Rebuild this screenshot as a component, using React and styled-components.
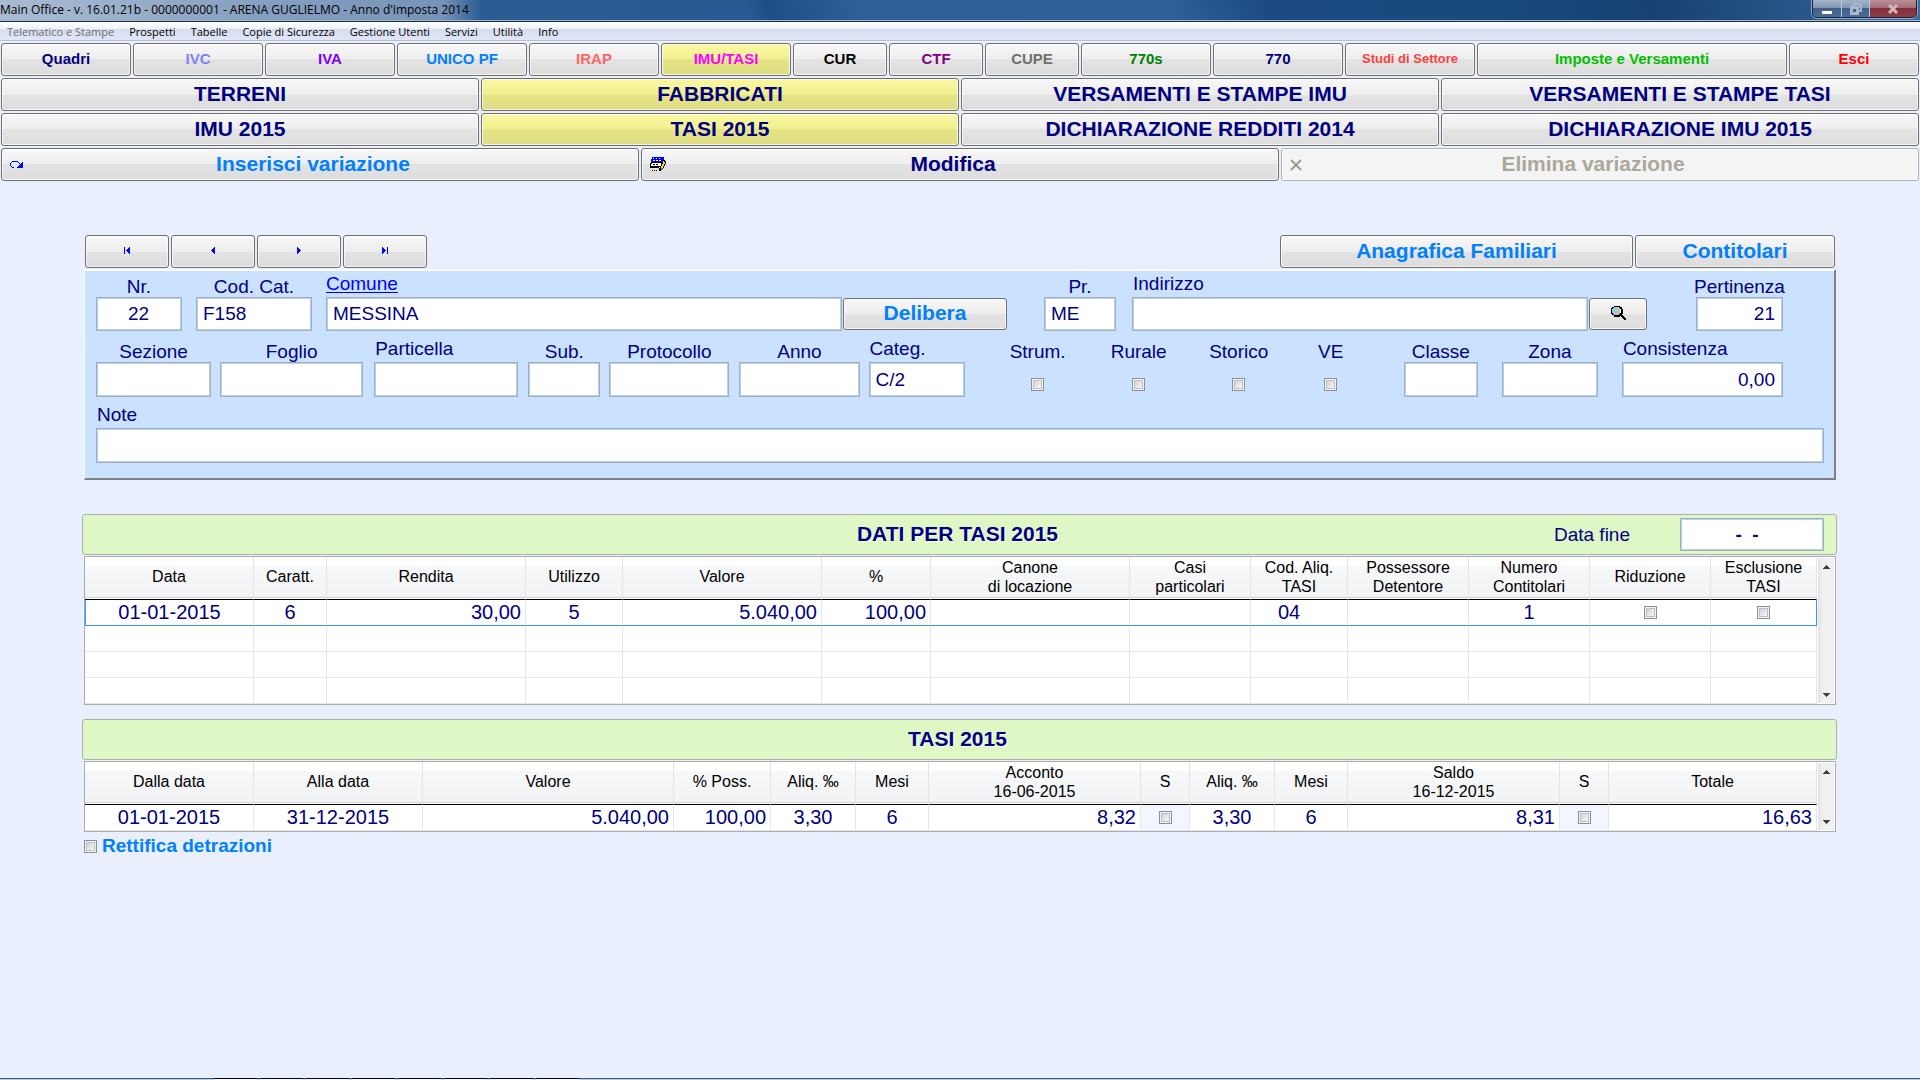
import React from 'react';
import styled, { createGlobalStyle, css } from 'styled-components';

const NAVY = '#000080';
const SKY = '#0080ff';

const GlobalStyle = createGlobalStyle`
  *, *::before, *::after { box-sizing: border-box; }
  body {
    margin: 0;
    background: #e9effd;
    color: ${NAVY};
    font-family: "Liberation Sans", Arial, sans-serif;
    font-size: 19px;
  }
  button, input { font-family: inherit; color: inherit; margin: 0; }
`;

const Window = styled.div`
  min-height: 100vh;
  display: flex;
  flex-direction: column;
`;

/* ---------- title bar and menu ---------- */

const TitleBar = styled.header`
  height: 22px;
  display: flex;
  justify-content: space-between;
  align-items: flex-start;
  border-bottom: 1px solid #1d2b45;
  box-shadow: inset 0 -1px 0 #9dbad9;
  background: linear-gradient(75deg, #6f8fb8 0%, #2c5a92 14%, #2b5c94 30%, #275a92 39%, #1c4f85 40%,
    #2d6198 45%, #2d6197 61%, #1b4b80 66%, #184a7e 78%, #174172 86%, #2a5689 94%, #3f6b9c 100%);
`;

const Caption = styled.h1`
  margin: 0;
  padding-right: 12px;
  font: 400 12px/20px "Open Sans", "Noto Sans", sans-serif;
  color: #000;
  white-space: nowrap;
  background: linear-gradient(90deg, rgba(190, 203, 220, 0.75), rgba(150, 172, 200, 0.7) 92%, rgba(150, 172, 200, 0));
`;

const CaptionButtons = styled.div`
  display: flex;
  height: 18px;
  margin-right: 3px;
  border: 1px solid #10243f;
  border-top: 0;
  border-radius: 0 0 5px 5px;
  box-shadow: 0 0 0 1px #8fa9c6;
  overflow: hidden;
`;

const CaptionButton = styled.button`
  width: ${(p) => (p.$close ? 47 : 28)}px;
  padding: 0;
  border: 0;
  border-left: ${(p) => (p.$first ? 0 : 1)}px solid #b9c8da;
  display: flex;
  align-items: center;
  justify-content: center;
  background: ${(p) =>
    p.$close
      ? 'linear-gradient(#b98f98, #a06a74 50%, #83303b 50%, #8d3c46)'
      : 'linear-gradient(#a3b4c9, #7b93b0 50%, #3f6088 50%, #4a6d95)'};
`;

const MenuBar = styled.nav`
  height: 19px;
  display: flex;
  align-items: center;
  border-bottom: 1px solid #b6bcd2;
  background: linear-gradient(#ffffff 0, #eef1f8 7px, #d6ddef 7px, #e0e6f6 100%);
`;

const MenuItem = styled.button`
  padding: 1px 8px 0 7px;
  border: 0;
  background: none;
  font: 400 11px/18px "Open Sans", "Noto Sans", sans-serif;
  color: ${(p) => (p.disabled ? '#6d6d6d' : '#000')};
  white-space: nowrap;
`;

/* ---------- buttons ---------- */

const faces = {
  plain: 'linear-gradient(#f8f8f8, #ededed 50%, #e3e3e3 50%, #dddddd)',
  active: 'linear-gradient(#faf9a2, #f1ef8e 50%, #e6e485 50%, #dfdd84)',
  disabled: '#f4f4f4',
};

const Button = styled.button`
  position: relative;
  flex: ${(p) => p.$grow || 478} 1 ${(p) => p.$grow || 478}px;
  min-width: 0;
  height: 33px;
  padding: 0 0 2px;
  display: flex;
  align-items: center;
  justify-content: center;
  border: 1px solid ${(p) => (p.disabled ? '#adb2b5' : '#707070')};
  border-radius: 3px;
  box-shadow: inset 0 0 0 1px rgba(255, 255, 255, 0.7);
  background: ${(p) => (p.disabled ? faces.disabled : p.$active ? faces.active : faces.plain)};
  color: ${(p) => p.$color || NAVY};
  font-size: ${(p) => p.$size || 21}px;
  font-weight: 700;
  white-space: nowrap;
`;

const ActionButton = styled(Button)`
  padding-right: 14px;
`;

const ButtonIcon = styled.span`
  position: absolute;
  left: 8px;
  top: 0;
  height: 100%;
  display: flex;
  align-items: center;
`;

const Toolbar = styled.div`
  display: flex;
  gap: 2px;
  padding: 2px 1px 0;
`;

/* ---------- property form ---------- */

const Content = styled.main`
  flex: 1;
  padding: 54px 83px 0 82px;
`;

const RecordBar = styled.div`
  display: flex;
  gap: 2px;
  margin: 0 2px 1px 3px;
`;

const Spacer = styled.div`
  flex: ${(p) => p.$grow} 1 ${(p) => p.$grow}px;
`;

const Panel = styled.section`
  margin: 0 1px 0 2px;
  padding: 3px 10px 15px 11px;
  display: flex;
  flex-direction: column;
  gap: 8px;
  background: #cae1ff;
  border-style: solid;
  border-width: 2px 2px 2px 1px;
  border-color: #fdfdfd #7c8288 #7c8288 #fdfdfd;
`;

const FieldRow = styled.div`
  --field-height: ${(p) => p.$height || 35}px;
  display: flex;
  align-items: flex-end;
  padding-right: ${(p) => p.$end || 0}px;
`;

const cell = css`
  flex: ${(p) => p.$grow} 1 ${(p) => p.$grow}px;
  min-width: 0;
  margin-left: ${(p) => p.$before || 0}px;
`;

const FieldBox = styled.div`
  ${cell}
  display: flex;
  flex-direction: column;
  align-items: ${(p) => (p.$raised ? 'flex-start' : 'center')};
`;

const Label = styled.label`
  line-height: 20px;
  white-space: nowrap;
  padding: ${(p) => (p.$raised ? '0 0 3px 1px' : '0')};
`;

const LabelLink = styled.a`
  line-height: 20px;
  padding-bottom: 3px;
  color: #0000ff;
  text-underline-offset: 2px;
`;

const Input = styled.input`
  width: 100%;
  height: var(--field-height, 33px);
  padding: 0 7px 0 6px;
  border: 1px solid #a5adb8;
  box-shadow: inset 0 0 0 1px #b4d2f2;
  border-radius: 0;
  outline: 0;
  background: #fff;
  font-size: 19px;
  font-weight: ${(p) => (p.$bold ? 700 : 400)};
  text-align: ${(p) => p.$align || 'left'};
`;

const DateInput = styled(Input)`
  width: 144px;
  height: 33px;
  padding-right: 16px;
`;

const RowButton = styled(Button)`
  ${cell}
  height: 32px;
  margin-bottom: 1px;
`;

const CheckHolder = styled.div`
  height: var(--field-height);
  display: flex;
  align-items: flex-end;
  padding-bottom: 6px;
`;

const Check = styled.input.attrs({ type: 'checkbox' })`
  appearance: none;
  display: block;
  flex: none;
  width: 13px;
  height: 13px;
  border: 1px solid #8e8f8f;
  background: linear-gradient(135deg, #c4c9d1, #f6f6f6 80%);
  box-shadow: inset 0 0 0 1px #f4f4f4, inset 0 0 0 2px #bcc0c6;
`;

/* ---------- tables ---------- */

const SectionBar = styled.div`
  height: 41px;
  margin-top: ${(p) => p.$top}px;
  padding: 0 12px;
  display: grid;
  grid-template-columns: 1fr auto 1fr;
  align-items: center;
  border: 1px solid #a9b3ac;
  border-radius: 3px;
  background: #dff7c5;
`;

const SectionTitle = styled.h2`
  grid-column: 2;
  margin: 0;
  padding: 0 4px 2px 0;
  font-size: 21px;
  line-height: 24px;
  text-shadow: 1px 1px 0 #fff;
`;

const SectionField = styled.div`
  display: flex;
  justify-content: flex-end;
  align-items: center;
  gap: 50px;
`;

const GridBox = styled.div`
  margin: 1px 1px 0 2px;
  display: flex;
  border: 1px solid #a7adb5;
  background: #fff;
`;

const Table = styled.table`
  flex: 1;
  min-width: 0;
  table-layout: fixed;
  border-collapse: separate;
  border-spacing: 0;
`;

const Th = styled.th`
  height: 43px;
  padding: 0 0 3px;
  border-right: 1px solid #e2e4e6;
  border-bottom: 1px solid #000;
  box-shadow: inset 0 -1px 0 #fff, inset 0 -2px 0 #d5d5d5;
  background: linear-gradient(#fff 9px, #f7f8fa 9px, #f1f2f4 100%);
  color: #000;
  font-size: 16px;
  font-weight: 400;
  line-height: 19px;
  white-space: pre-line;
`;

const Td = styled.td`
  height: 26px;
  padding: 0 ${(p) => p.$inset || (p.$align === 'right' ? 4 : 0)}px 2px 0;
  border-right: 1px solid #e6e6e6;
  border-bottom: 1px solid #e6e6e6;
  background: ${(p) => (p.$tint ? '#f2f6fe' : '#fff')};
  font-size: 20px;
  line-height: 22px;
  text-align: ${(p) => p.$align || 'center'};
  white-space: nowrap;

  & > input { margin: 1px auto 0; }
`;

const Tr = styled.tr`
  ${(p) =>
    p.$selected &&
    css`
      & > td { border-bottom-color: #3399ee; }
      & > td:first-child { border-left: 1px solid #3399ee; }
      & > td:last-child { border-right-color: #3399ee; }
    `}
`;

const ScrollTrack = styled.div`
  width: 18px;
  padding: 7px 0 6px;
  display: flex;
  flex-direction: column;
  justify-content: space-between;
  align-items: center;
  border: 1px solid #fff;
  background: linear-gradient(90deg, #e3e3e3, #f0f0f0 30%, #f0f0f0);
`;

const Rectify = styled.label`
  display: flex;
  align-items: center;
  gap: 5px;
  width: max-content;
  margin: 3px 0 0 2px;
  color: ${SKY};
  font-weight: 700;
  line-height: 22px;
`;

/* ---------- bottom edge ---------- */

const BottomEdge = styled.footer`
  height: 2px;
  display: flex;
  gap: 3px;
  padding-left: 214px;
  background: linear-gradient(#42566f 1px, #b9cfe6 1px);
`;

const EdgeTab = styled.span`
  width: 43px;
  background: linear-gradient(#05070a 1px, #f4f8fd 1px);
`;

/* ---------- icons ---------- */

const Svg = ({ w, h, children }) => (
  <svg width={w} height={h} viewBox={`0 0 ${w} ${h}`} shapeRendering="crispEdges" aria-hidden="true">
    {children}
  </svg>
);

const RedoIcon = () => (
  <Svg w={13} h={7}>
    <path d="M2 0h6v1H2zM1 1h1v1H1zM0 2h1v3H0zM1 5h1v1H1zM2 6h2v1H2zM8 1h1v1H8zM9 2h1v1H9zM12 1h1v6H7V6h1V5h1V4h1V3h1V2h1z" fill="#0000ff" />
  </Svg>
);

const EditIcon = () => (
  <Svg w={16} h={15}>
    <path d="M2 0h12v5H1V2h1z" fill="#0000ff" />
    <path d="M3 1h1v1H3zM6 1h1v1H6zM9 1h1v1H9zM3 3h2v1H3zM6 3h2v1H6zM9 3h2v1H9z" fill="#fff" />
    <path d="M1 5h12v5H0V6h1z" fill="#000" />
    <path d="M2 6h9v3H1V7h1z" fill="#fff" />
    <path d="M3 7h2v1H3zM6 7h2v1H6z" fill="#000" />
    <path d="M0 10h9v1H0zM2 13h1v1H2zM4 13h1v1H4zM6 13h1v1H6z" fill="#000" />
    <path d="M13 3h2v1h1v3h-1v2h-1v2h-1v1h-1v1h-1v1H9v-3h1V9h1V7h1V5h1z" fill="#000" />
    <path d="M13 4h1v1h1v2h-1v2h-1v2h-1v1h-1V9h1V7h1z" fill="#ffe000" />
  </Svg>
);

const CrossIcon = () => (
  <svg width="13" height="12" viewBox="0 0 13 12" aria-hidden="true">
    <path d="M1 1l10 10M11 1L1 11" stroke="#9b9b9b" strokeWidth="2" />
  </svg>
);

const NAV_SHAPES = {
  first: 'M0 0h1v7H0zM5 0h1v7H5zM4 1h1v5H4zM3 2h1v3H3zM2 3h1v1H2z',
  prev: 'M4 0h1v7H4zM3 1h1v5H3zM2 2h1v3H2zM1 3h1v1H1z',
  next: 'M1 0h1v7H1zM2 1h1v5H2zM3 2h1v3H3zM4 3h1v1H4z',
  last: 'M0 0h1v7H0zM1 1h1v5H1zM2 2h1v3H2zM3 3h1v1H3zM5 0h1v7H5z',
};

const NavIcon = ({ kind }) => (
  <Svg w={6} h={7}>
    <path d={NAV_SHAPES[kind]} fill="#0000ff" />
  </Svg>
);

const SearchIcon = () => (
  <Svg w={15} h={15}>
    <path d="M3 0h6v1h2v2h1v5h-1v1h1v1h1v1h1v1h1v2h-2v-1h-1v-1h-1v-1h-1v-1H9v1H3V9H1V8H0V2h1V1h2z" fill="#000" />
    <path d="M3 1h5v1h1v6H8v1H3V8H2V7H1V3h1V2h1z" fill="#b9c3c9" />
    <path d="M3 2h3v1H5v1H4v1H3v1H2V3h1z" fill="#48e8f0" />
    <path d="M9 3h1v4H9z" fill="#fff" />
  </Svg>
);

const ArrowUp = () => (
  <Svg w={7} h={4}><path d="M3 0h1v1h1v1h1v1h1v1H0V3h1V2h1V1h1z" fill="#404040" /></Svg>
);
const ArrowDown = () => (
  <Svg w={7} h={4}><path d="M0 0h7v1H6v1H5v1H4v1H3V3H2V2H1V1H0z" fill="#404040" /></Svg>
);

/* ---------- data ---------- */

const menu = ['Prospetti', 'Tabelle', 'Copie di Sicurezza', 'Gestione Utenti', 'Servizi', 'Utilità', 'Info'];

const modules = [
  ['Quadri', NAVY, 130], ['IVC', '#8080ff', 130], ['IVA', '#8000ff', 130], ['UNICO PF', SKY, 130],
  ['IRAP', '#ff6666', 130], ['IMU/TASI', '#ff00ff', 130, true], ['CUR', '#000000', 94],
  ['CTF', '#800080', 94], ['CUPE', '#707070', 94], ['770s', '#008000', 130], ['770', NAVY, 130],
  ['Studi di Settore', '#ff4040', 130, false, 13], ['Imposte e Versamenti', '#00c000', 310], ['Esci', '#ff0000', 130],
];

const areas = [
  ['TERRENI', 'FABBRICATI', 'VERSAMENTI E STAMPE IMU', 'VERSAMENTI E STAMPE TASI'],
  ['IMU 2015', 'TASI 2015', 'DICHIARAZIONE REDDITI 2014', 'DICHIARAZIONE IMU 2015'],
];

/* label, width share, alignment, right inset */
const dataColumns = [
  ['Data', 169], ['Caratt.', 73], ['Rendita', 199, 'right'], ['Utilizzo', 97], ['Valore', 199, 'right'],
  ['%', 109, 'right'], ['Canone\ndi locazione', 199], ['Casi\nparticolari', 121],
  ['Cod. Aliq.\nTASI', 97, 'center', 20], ['Possessore\nDetentore', 121], ['Numero\nContitolari', 121],
  ['Riduzione', 121], ['Esclusione\nTASI', 106],
];
const dataRows = [
  ['01-01-2015', '6', '30,00', '5', '5.040,00', '100,00', '', '', '04', '', '1', false, false],
  Array(13).fill(''),
  Array(13).fill(''),
  Array(13).fill(''),
];

const tasiColumns = [
  ['Dalla data', 169], ['Alla data', 169], ['Valore', 251, 'right'], ['% Poss.', 97, 'right'], ['Aliq. ‰', 85],
  ['Mesi', 73], ['Acconto\n16-06-2015', 212, 'right'], ['S', 49], ['Aliq. ‰', 85], ['Mesi', 73],
  ['Saldo\n16-12-2015', 212, 'right'], ['S', 49], ['Totale', 208, 'right'],
];
const tasiRows = [
  ['01-01-2015', '31-12-2015', '5.040,00', '100,00', '3,30', '6', '8,32', false, '3,30', '6', '8,31', false, '16,63'],
];

/* ---------- composed parts ---------- */

const Field = ({ id, label, grow, before, raised, align, value, link }) => (
  <FieldBox $grow={grow} $before={before} $raised={raised}>
    {link ? (
      <LabelLink href="#comune" id={`${id}-label`}>{label}</LabelLink>
    ) : (
      <Label htmlFor={id} $raised={raised}>{label}</Label>
    )}
    <Input id={id} aria-labelledby={link ? `${id}-label` : undefined} defaultValue={value} $align={align} />
  </FieldBox>
);

const CheckField = ({ id, label, before }) => (
  <FieldBox $grow={60} $before={before}>
    <Label htmlFor={id}>{label}</Label>
    <CheckHolder><Check id={id} /></CheckHolder>
  </FieldBox>
);

const DataGrid = ({ columns, rows, selected, tint }) => {
  const total = columns.reduce((sum, c) => sum + c[1], 0);
  return (
    <GridBox>
      <Table>
        <colgroup>
          {columns.map((c, i) => <col key={i} style={{ width: `${(c[1] / total) * 100}%` }} />)}
        </colgroup>
        <thead>
          <tr>{columns.map((c, i) => <Th key={i} scope="col">{c[0]}</Th>)}</tr>
        </thead>
        <tbody>
          {rows.map((row, r) => (
            <Tr key={r} $selected={r === selected}>
              {row.map((value, i) => (
                <Td key={i} $align={columns[i][2]} $inset={columns[i][3]} $tint={tint && typeof value === 'boolean'}>
                  {typeof value === 'boolean' ? (
                    <Check defaultChecked={value} aria-label={columns[i][0].replace('\n', ' ')} />
                  ) : value}
                </Td>
              ))}
            </Tr>
          ))}
        </tbody>
      </Table>
      <ScrollTrack><ArrowUp /><ArrowDown /></ScrollTrack>
    </GridBox>
  );
};

export default function App() {
  return (
    <Window>
      <GlobalStyle />
      <TitleBar>
        <Caption>Main Office - v. 16.01.21b - 0000000001 - ARENA GUGLIELMO - Anno d'imposta 2014</Caption>
        <CaptionButtons>
          <CaptionButton $first aria-label="Riduci a icona">
            <Svg w={12} h={12}><path d="M0 7h12v5H0z" fill="#5b6470" /><path d="M1 8h10v3H1z" fill="#fff" /></Svg>
          </CaptionButton>
          <CaptionButton aria-label="Ripristina">
            <Svg w={12} h={12}>
              <path d="M3 0h9v9H9V7h1V2H5v1H3zM0 3h9v9H0zM3 6v3h3V6z" fill="#a9b7c8" fillRule="evenodd" />
            </Svg>
          </CaptionButton>
          <CaptionButton $close aria-label="Chiudi">
            <svg width="12" height="10" viewBox="0 0 12 10" aria-hidden="true">
              <path d="M2 1l8 8M10 1L2 9" stroke="#d3b5ba" strokeWidth="3" />
            </svg>
          </CaptionButton>
        </CaptionButtons>
      </TitleBar>
      <MenuBar>
        <MenuItem disabled>Telematico e Stampe</MenuItem>
        {menu.map((m) => <MenuItem key={m}>{m}</MenuItem>)}
      </MenuBar>

      <Toolbar>
        {modules.map(([name, color, grow, active, size]) => (
          <Button key={name} $color={color} $grow={grow} $active={active} $size={size || 15}>{name}</Button>
        ))}
      </Toolbar>
      {areas.map((row) => (
        <Toolbar key={row[0]}>
          {row.map((name, i) => <Button key={name} $active={i === 1}>{name}</Button>)}
        </Toolbar>
      ))}
      <Toolbar>
        <ActionButton $color={SKY}><ButtonIcon><RedoIcon /></ButtonIcon>Inserisci variazione</ActionButton>
        <ActionButton><ButtonIcon><EditIcon /></ButtonIcon>Modifica</ActionButton>
        <ActionButton disabled $color="#aca899"><ButtonIcon><CrossIcon /></ButtonIcon>Elimina variazione</ActionButton>
      </Toolbar>

      <Content>
        <RecordBar>
          <Button $grow={84} aria-label="Primo"><NavIcon kind="first" /></Button>
          <Button $grow={84} aria-label="Precedente"><NavIcon kind="prev" /></Button>
          <Button $grow={84} aria-label="Successivo"><NavIcon kind="next" /></Button>
          <Button $grow={84} aria-label="Ultimo"><NavIcon kind="last" /></Button>
          <Spacer $grow={849} />
          <Button $grow={353} $color={SKY}>Anagrafica Familiari</Button>
          <Button $grow={200} $color={SKY}>Contitolari</Button>
        </RecordBar>

        <Panel>
          <FieldRow $height={34} $end={41}>
            <Field id="nr" label="Nr." grow={86} align="center" value="22" />
            <Field id="codcat" label="Cod. Cat." grow={116} before={14} value="F158" />
            <Field id="comune" label="Comune" grow={516} before={14} raised link value="MESSINA" />
            <RowButton $grow={164} $before={1} $color={SKY}>Delibera</RowButton>
            <Field id="pr" label="Pr." grow={72} before={37} value="ME" />
            <Field id="indirizzo" label="Indirizzo" grow={456} before={16} raised />
            <RowButton $grow={58} $before={1} aria-label="Cerca"><SearchIcon /></RowButton>
            <Field id="pertinenza" label="Pertinenza" grow={87} before={49} align="right" value="21" />
          </FieldRow>
          <FieldRow $end={41}>
            <Field id="sezione" label="Sezione" grow={115} />
            <Field id="foglio" label="Foglio" grow={143} before={9} />
            <Field id="particella" label="Particella" grow={144} before={11} raised />
            <Field id="sub" label="Sub." grow={72} before={10} />
            <Field id="protocollo" label="Protocollo" grow={120} before={9} />
            <Field id="anno" label="Anno" grow={120} before={10} />
            <Field id="categ" label="Categ." grow={96} before={9} raised value="C/2" />
            <CheckField id="strum" label="Strum." before={43} />
            <CheckField id="rurale" label="Rurale" before={41} />
            <CheckField id="storico" label="Storico" before={40} />
            <CheckField id="ve" label="VE" before={32} />
            <Field id="classe" label="Classe" grow={74} before={43} />
            <Field id="zona" label="Zona" grow={96} before={24} />
            <Field id="consistenza" label="Consistenza" grow={161} before={24} raised align="right" value="0,00" />
          </FieldRow>
          <FieldRow>
            <Field id="note" label="Note" grow={1728} raised />
          </FieldRow>
        </Panel>

        <SectionBar $top={34}>
          <SectionTitle>DATI PER TASI 2015</SectionTitle>
          <SectionField>
            <Label htmlFor="datafine">Data fine</Label>
            <DateInput id="datafine" $align="center" $bold defaultValue="-  -" />
          </SectionField>
        </SectionBar>
        <DataGrid columns={dataColumns} rows={dataRows} selected={0} />

        <SectionBar $top={14}>
          <SectionTitle>TASI 2015</SectionTitle>
        </SectionBar>
        <DataGrid columns={tasiColumns} rows={tasiRows} tint />

        <Rectify><Check />Rettifica detrazioni</Rectify>
      </Content>

      <BottomEdge>
        {Array.from({ length: 8 }, (_, i) => <EdgeTab key={i} />)}
      </BottomEdge>
    </Window>
  );
}
